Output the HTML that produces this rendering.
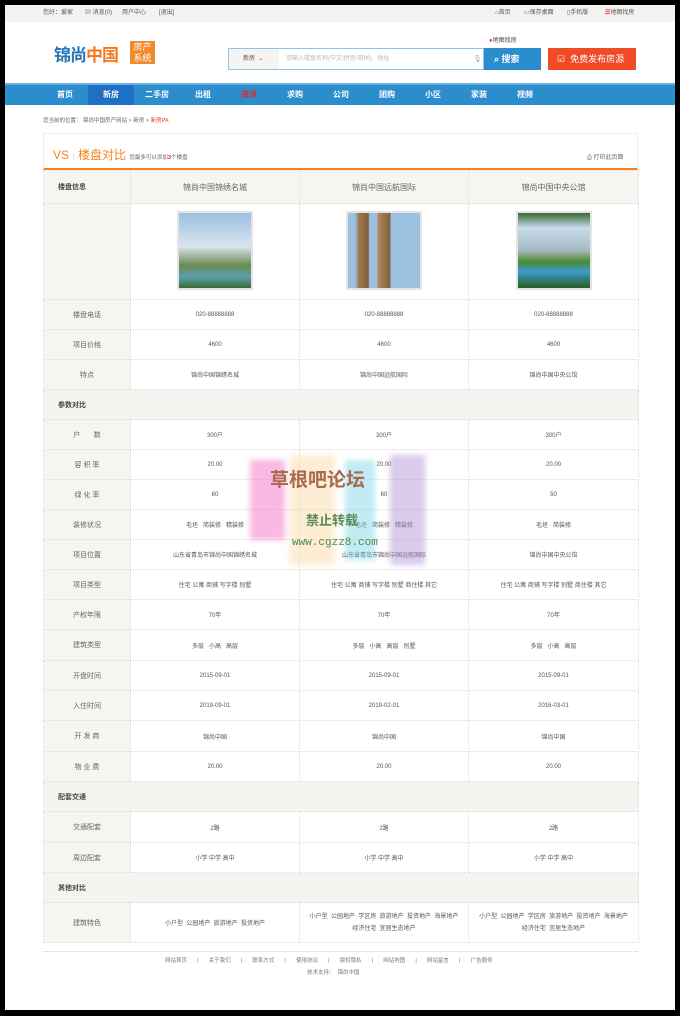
<!DOCTYPE html>
<html><head><meta charset="utf-8">
<style>
*{margin:0;padding:0;box-sizing:border-box}
body{width:680px;height:1016px;background:#000;font-family:"Liberation Sans","Noto Sans CJK SC",sans-serif;position:relative;overflow:hidden;color:#555}
#pg{position:absolute;left:5px;top:5px;width:670px;height:1005px;background:#fff}
.a{position:absolute;white-space:nowrap}
.top{position:absolute;left:0;top:0;width:670px;height:17px;background:#f3f3f1;font-size:6px;color:#555;line-height:17px}
.nav{position:absolute;left:0;top:78px;width:670px;height:22px;background:#2c8dcd;border-top:2px solid #6ab0e0}
.nav span{position:absolute;top:0;line-height:20px;font-size:8px;color:#fff;font-weight:bold;width:46px;text-align:center}
table{position:absolute;left:38px;top:165px;border-collapse:collapse;table-layout:fixed;width:595px}
td{border:1px dotted #ddd;text-align:center;font-size:6px;color:#555;height:30px}
td.l{background:#f7f5f1;font-size:7px;color:#666}
tr.s td{background:#f6f4f0;text-align:left;padding-left:14px;font-weight:bold;font-size:7px;color:#444}
.img{display:inline-block;width:76px;height:79px;border:2px solid #e4e4e4}
.wb{position:absolute;filter:blur(3px)}
</style></head><body>
<div id="pg">
<div class="top"><span class="a" style="left:38px">您好：爱家</span><span class="a" style="left:80px">▤ 消息(0)</span><span class="a" style="left:117px">用户中心</span><span class="a" style="left:154px">[退出]</span>
<span class="a" style="left:490px">⌂首页</span><span class="a" style="left:519px">▭保存桌面</span><span class="a" style="left:562px">▯手机版</span><span class="a" style="left:600px"><b style="color:#e33">☰</b>地图找房</span></div>
<div class="a" style="left:49px;top:36px;font-size:17px;font-weight:bold;letter-spacing:-1px"><span style="color:#2a74b8">锦尚</span><span style="color:#f07a20">中国</span></div>
<div class="a" style="left:125px;top:36px;width:25px;height:23px;background:#f08a2c;color:#fff;font-size:9px;line-height:11px;text-align:center;padding-top:1px">房产<br>系统</div>
<div class="a" style="left:484px;top:30px;font-size:6px;color:#444"><span style="color:#e33">●</span>地图找房</div>
<div class="a" style="left:223px;top:43px;width:256px;height:22px;border:1px solid #8cc4ea;background:#fff"></div>
<div class="a" style="left:224px;top:44px;width:50px;height:20px;background:#f5f4f0;font-size:6px;line-height:20px;padding-left:14px;color:#555">新房 &nbsp;⌄</div>
<div class="a" style="left:281px;top:44px;font-size:6px;line-height:20px;color:#bbb">请输入楼盘名称(中文/拼音/简拼)、地址</div>
<div class="a" style="left:468px;top:50px;font-size:7px;color:#aaa">🎙</div>
<div class="a" style="left:479px;top:43px;width:57px;height:22px;background:#2c8dcd;color:#fff;font-size:9px;line-height:22px;padding-left:10px;font-weight:bold">⌕ 搜索</div>
<div class="a" style="left:543px;top:43px;width:88px;height:22px;background:#f04a26;color:#fff;font-size:9px;line-height:22px;padding-left:9px">☑ &nbsp;免费发布房源</div>
<div class="nav">
<span style="left:37px">首页</span><span style="left:83px;background:#1f6fc4;height:20px">新房</span><span style="left:129px">二手房</span><span style="left:175px">出租</span><span style="left:221px;color:#e22">资讯</span><span style="left:267px">求购</span><span style="left:313px">公司</span><span style="left:359px">团购</span><span style="left:405px">小区</span><span style="left:451px">家装</span><span style="left:497px">视频</span></div>
<div class="a" style="left:38px;top:111px;font-size:5.5px;color:#666">您当前的位置： 锦尚中国房产网站 &gt; 新房 &gt; <span style="color:#e33">新房PK</span></div>
<div class="a" style="left:38px;top:128px;width:595px;height:37px;border:1px dotted #ddd;border-bottom:2px solid #f58220"></div>
<div class="a" style="left:48px;top:141px;font-size:12px;color:#f58220">VS <span style="color:#ddd;font-size:9px">|</span> 楼盘对比 <span style="font-size:5.5px;color:#666">您最多可以添加<b style="color:#e22">3</b>个楼盘</span></div>
<div class="a" style="left:582px;top:147px;font-size:6px;color:#666">⎙ 打印此页面</div>
<table>
<colgroup><col style="width:87px"><col style="width:169px"><col style="width:169px"><col style="width:170px"></colgroup>
<tr style="height:33px"><td class="l" style="text-align:left;padding-left:14px;font-weight:bold;color:#444">楼盘信息</td><td class="l" style="font-size:8px">锦尚中国锦绣名城</td><td class="l" style="font-size:8px">锦尚中国远航国际</td><td class="l" style="font-size:8px">锦尚中国中央公馆</td></tr>
<tr style="height:96px"><td class="l"></td>
<td><span class="img" style="background:linear-gradient(#9cc0e0 0,#d8e4ee 45%,#6a8a50 70%,#5aa0b0 85%,#3d6a30 100%)"></span></td>
<td><span class="img" style="background:linear-gradient(90deg,#9cc0e0 10%,#a07850 15%,#806040 28%,#9cc0e0 30%,#9cc0e0 40%,#b08860 42%,#806040 58%,#9cc0e0 60%,#9cc0e0 100%);"></span></td>
<td><span class="img" style="background:linear-gradient(#3a6a30 0,#c8dcec 20%,#a8b8c0 50%,#4a8a30 65%,#3a9cd0 78%,#2a5a20 100%)"></span></td></tr>
<tr><td class="l">楼盘电话</td><td>020-88888888</td><td>020-88888888</td><td>020-88888888</td></tr>
<tr><td class="l">项目价格</td><td>4600</td><td>4600</td><td>4600</td></tr>
<tr><td class="l">特点</td><td>锦尚中国锦绣名城</td><td>锦尚中国远航国际</td><td>锦尚中国中央公馆</td></tr>
<tr class="s"><td colspan="4">参数对比</td></tr>
<tr><td class="l">户 &nbsp; &nbsp; &nbsp; 数</td><td>300户</td><td>300户</td><td>300户</td></tr>
<tr><td class="l">容 积 率</td><td>20.00</td><td>20.00</td><td>20.00</td></tr>
<tr><td class="l">绿 化 率</td><td>60</td><td>60</td><td>50</td></tr>
<tr><td class="l">装修状况</td><td>毛坯 &nbsp; 简装修 &nbsp; 精装修</td><td>毛坯 &nbsp; 简装修 &nbsp; 精装修</td><td>毛坯 &nbsp; 简装修</td></tr>
<tr><td class="l">项目位置</td><td>山东省青岛市锦尚中国锦绣名城</td><td>山东省青岛市锦尚中国远航国际</td><td>锦尚中国中央公馆</td></tr>
<tr><td class="l">项目类型</td><td>住宅 公寓 商铺 写字楼 别墅</td><td>住宅 公寓 商铺 写字楼 别墅 商住楼 其它</td><td>住宅 公寓 商铺 写字楼 别墅 商住楼 其它</td></tr>
<tr><td class="l">产权年限</td><td>70年</td><td>70年</td><td>70年</td></tr>
<tr style="height:31px"><td class="l">建筑类型</td><td>多层 &nbsp; 小高 &nbsp; 高层</td><td>多层 &nbsp; 小高 &nbsp; 高层 &nbsp; 别墅</td><td>多层 &nbsp; 小高 &nbsp; 高层</td></tr>
<tr><td class="l">开盘时间</td><td>2015-09-01</td><td>2015-09-01</td><td>2015-09-01</td></tr>
<tr><td class="l">入住时间</td><td>2019-09-01</td><td>2019-02-01</td><td>2016-03-01</td></tr>
<tr style="height:31px"><td class="l">开 发 商</td><td>锦尚中国</td><td>锦尚中国</td><td>锦尚中国</td></tr>
<tr><td class="l">物 业 费</td><td>20.00</td><td>20.00</td><td>20.00</td></tr>
<tr class="s"><td colspan="4">配套交通</td></tr>
<tr style="height:31px"><td class="l">交通配套</td><td>2路</td><td>2路</td><td>2路</td></tr>
<tr><td class="l">周边配套</td><td>小学 中学 高中</td><td>小学 中学 高中</td><td>小学 中学 高中</td></tr>
<tr class="s"><td colspan="4">其他对比</td></tr>
<tr style="height:40px"><td class="l">建筑特色</td><td>小户型 &nbsp;公园地产 &nbsp;旅游地产 &nbsp;投资地产</td><td style="line-height:12px">小户型 &nbsp;公园地产 &nbsp;学区房 &nbsp;旅游地产 &nbsp;投资地产 &nbsp;海景地产<br>经济住宅 &nbsp;宜居生态地产</td><td style="line-height:12px">小户型 &nbsp;公园地产 &nbsp;学区房 &nbsp;旅游地产 &nbsp;投资地产 &nbsp;海景地产<br>经济住宅 &nbsp;宜居生态地产</td></tr>
</table>
<div class="a" style="left:245px;top:450px;width:185px;height:115px">
<div class="wb" style="left:0;top:5px;width:35px;height:80px;background:rgba(240,100,190,.45)"></div>
<div class="wb" style="left:40px;top:0;width:45px;height:110px;background:rgba(250,210,150,.4)"></div>
<div class="wb" style="left:95px;top:5px;width:30px;height:100px;background:rgba(120,210,230,.45)"></div>
<div class="wb" style="left:140px;top:0;width:35px;height:110px;background:rgba(170,140,210,.45)"></div>
<div class="a" style="left:20px;top:10px;font-size:19px;font-weight:bold;color:#a86a50">草根吧论坛</div>
<div class="a" style="left:56px;top:55px;font-size:13px;font-weight:bold;color:#5a8a50">禁止转载</div>
<div class="a" style="left:42px;top:82px;font-size:11px;color:#4a8a40;font-family:'Liberation Mono',monospace">www.cgzz8.com</div>
</div>
<div class="a" style="left:38px;top:946px;width:595px;border-top:1px dotted #ccc"></div>
<div class="a" style="left:160px;top:951px;font-size:5.5px;color:#777;word-spacing:1px">网站首页 &nbsp; &nbsp;| &nbsp; &nbsp;关于我们 &nbsp; &nbsp;| &nbsp; &nbsp;联系方式 &nbsp; &nbsp;| &nbsp; &nbsp;使用协议 &nbsp; &nbsp;| &nbsp; &nbsp;版权隐私 &nbsp; &nbsp;| &nbsp; &nbsp;网站地图 &nbsp; &nbsp;| &nbsp; &nbsp;网站留言 &nbsp; &nbsp;| &nbsp; &nbsp;广告服务</div>
<div class="a" style="left:302px;top:963px;font-size:5.5px;color:#777">技术支持： &nbsp;锦尚中国</div>
</div>
</body></html>
